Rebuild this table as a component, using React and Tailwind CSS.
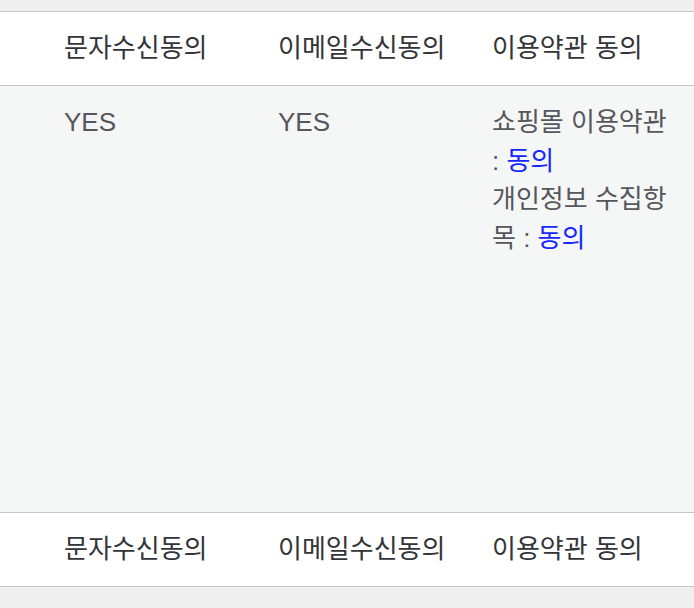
import React from "react"

const font = { fontFamily: '"Liberation Sans", "Noto Sans CJK KR", sans-serif' }

const headers = ["문자수신동의", "이메일수신동의", "이용약관 동의"]

function HeaderRow() {
  return (
    <div className="flex bg-white border-y border-[#c6c6ca] pl-[64px]">
      {headers.map((h) => (
        <div
          key={h}
          className="w-[214px] shrink-0 pr-[30px] py-[17px] leading-[39px] text-[26px] text-[#333438] whitespace-nowrap"
        >
          {h}
        </div>
      ))}
    </div>
  )
}

export default function App() {
  return (
    <div className="min-h-screen bg-[#efefef] pt-[11px]" style={font}>
      <HeaderRow />

      <div className="flex h-[426px] bg-[#f5f6f6] pl-[64px] pt-[17px] text-[26px] leading-[38.5px] text-[#55575c]">
        <div className="w-[214px] shrink-0 pr-[30px]">YES</div>
        <div className="w-[214px] shrink-0 pr-[30px]">YES</div>
        <div className="w-[214px] shrink-0 pr-[30px] break-all">
          <p>
            쇼핑몰 이용약관 : <span className="text-[#1428ff]">동의</span>
          </p>
          <p>
            개인정보 수집항목 : <span className="text-[#1428ff]">동의</span>
          </p>
        </div>
      </div>

      <HeaderRow />
    </div>
  )
}
